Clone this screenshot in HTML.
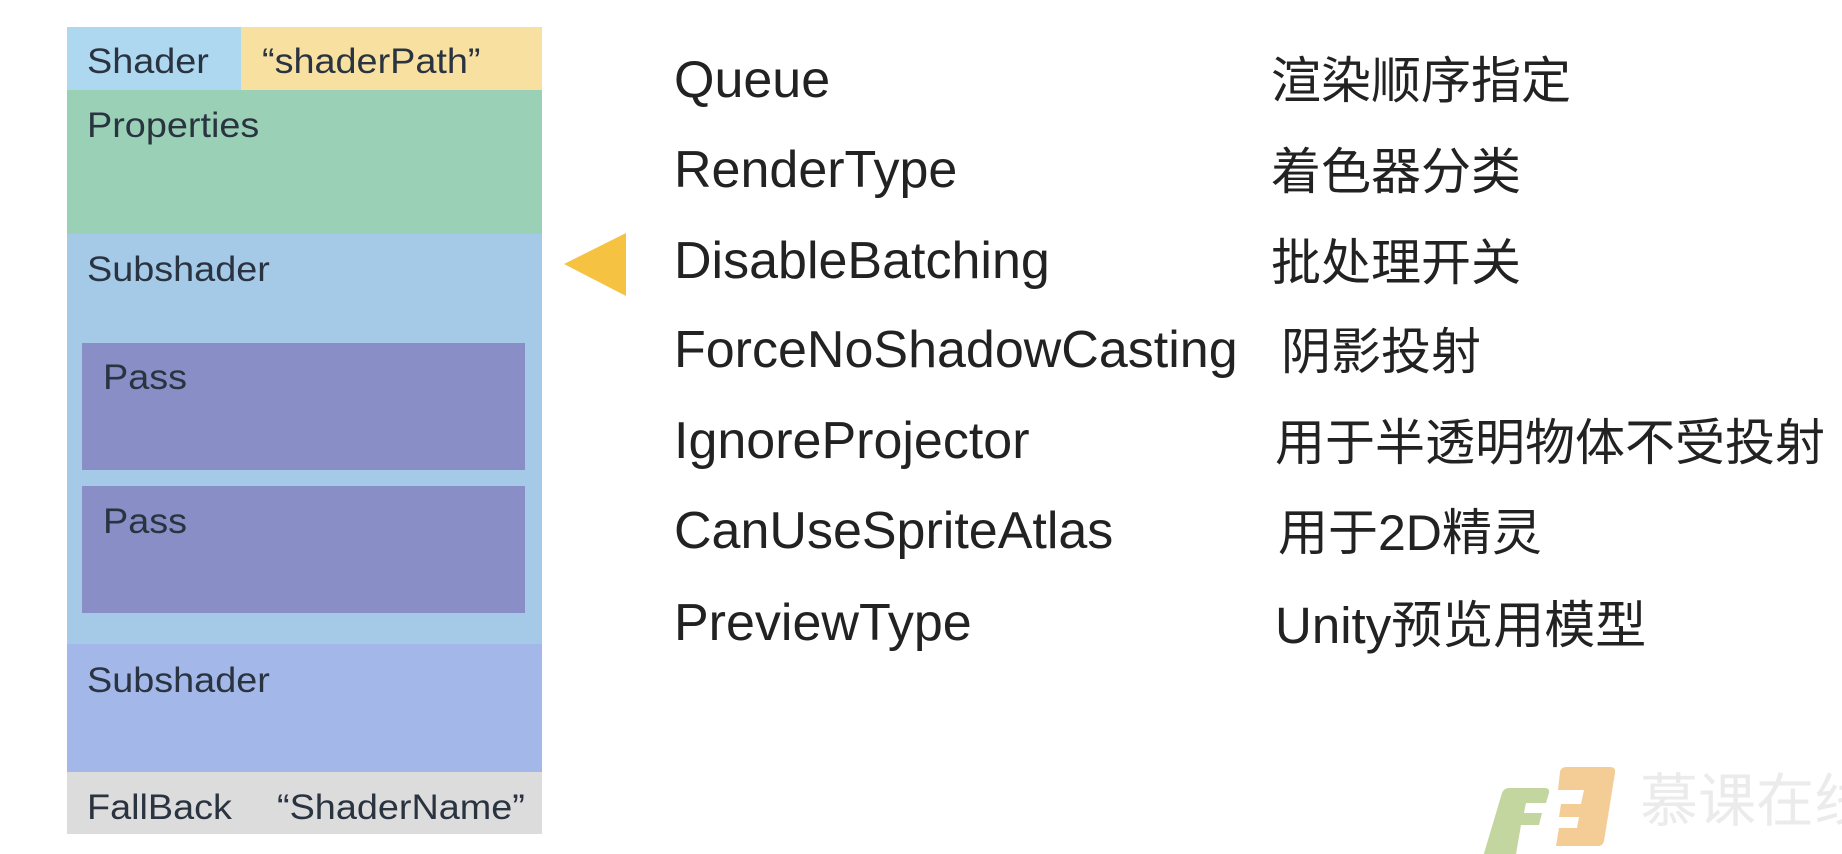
<!DOCTYPE html>
<html><head><meta charset="utf-8"><style>
body{margin:0;width:1842px;height:854px;background:#fff;position:relative;overflow:hidden;font-family:"Liberation Sans","Noto Sans CJK SC",sans-serif}
.b{position:absolute}
.t{position:absolute;font-size:35px;color:#2a3340;transform:scaleX(1.08);transform-origin:left top;white-space:nowrap;line-height:1}
.r{position:absolute;font-size:52px;color:#222;white-space:nowrap;line-height:1}
.c{font-size:50px}
</style></head><body>
<div class="b" style="left:67px;top:27px;width:174px;height:63px;background:#aed7f0"></div>
<div class="b" style="left:241px;top:27px;width:301px;height:63px;background:#f8e1a0"></div>
<div class="b" style="left:67px;top:90px;width:475px;height:144px;background:#9ad1b6"></div>
<div class="b" style="left:67px;top:234px;width:475px;height:410px;background:#a5cae8"></div>
<div class="b" style="left:82px;top:343px;width:443px;height:127px;background:#8a8ec6"></div>
<div class="b" style="left:82px;top:486px;width:443px;height:127px;background:#8a8ec6"></div>
<div class="b" style="left:67px;top:644px;width:475px;height:128px;background:#a3b8e8"></div>
<div class="b" style="left:67px;top:772px;width:475px;height:62px;background:#dcdcdc"></div>
<div class="t" style="left:87px;top:44px">Shader</div>
<div class="t" style="left:262px;top:44px">“shaderPath”</div>
<div class="t" style="left:87px;top:108px">Properties</div>
<div class="t" style="left:87px;top:252px">Subshader</div>
<div class="t" style="left:103px;top:360px">Pass</div>
<div class="t" style="left:103px;top:504px">Pass</div>
<div class="t" style="left:87px;top:663px">Subshader</div>
<div class="t" style="left:87px;top:790px">FallBack</div>
<div class="t" style="left:277px;top:790px">“ShaderName”</div>
<svg class="b" style="left:560px;top:230px" width="70" height="70"><polygon points="4,34 66,3 66,66" fill="#f5c242"/></svg>
<div class="r" style="left:674px;top:54px">Queue</div>
<div class="r" style="left:674px;top:144px">RenderType</div>
<div class="r" style="left:674px;top:235px">DisableBatching</div>
<div class="r" style="left:674px;top:324px">ForceNoShadowCasting</div>
<div class="r" style="left:674px;top:415px">IgnoreProjector</div>
<div class="r" style="left:674px;top:505px">CanUseSpriteAtlas</div>
<div class="r" style="left:674px;top:597px">PreviewType</div>
<div class="r c" style="left:1271px;top:56px">渲染顺序指定</div>
<div class="r c" style="left:1271px;top:147px">着色器分类</div>
<div class="r c" style="left:1271px;top:238px">批处理开关</div>
<div class="r c" style="left:1281px;top:327px">阴影投射</div>
<div class="r c" style="left:1275px;top:418px">用于半透明物体不受投射</div>
<div class="r c" style="left:1278px;top:508px">用于2D精灵</div>
<div class="r" style="left:1275px;top:600px;font-size:51px">Unity预览用模型</div>
<svg class="b" style="left:1480px;top:760px" width="150" height="94">
<path d="M22 33 q2-5 7-5 h36 q5 0 4 5 l-3 10 h-20 l-2 10 h18 l-3 12 h-18 l-6 35 h-33z" fill="#c4d6a0"/>
<path d="M80 12 q1-5 6-5 h44 q6 0 5 6 l-11 68 q-1 5-6 5 h-42 l3-18 h18 l2-11 h-20 l2-13 h20 l3-14 h-26z" fill="#f3cd95"/>
</svg>
<div class="r" style="left:1640px;top:773px;font-size:58px;color:#ebebeb">慕课在线</div>
</body></html>
